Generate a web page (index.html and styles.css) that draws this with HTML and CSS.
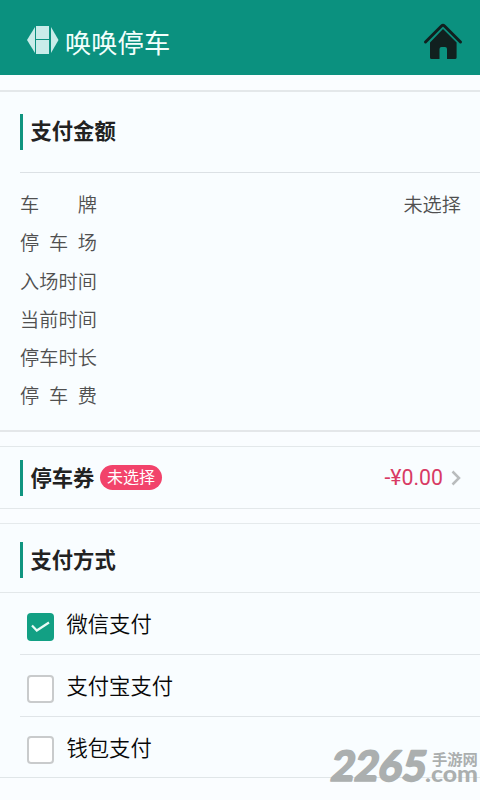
FILE: index.html
```html
<!DOCTYPE html>
<html lang="zh-CN">
<head>
<meta charset="utf-8">
<title>唤唤停车</title>
<link rel="stylesheet" href="styles.css">
</head>
<body>
<header class="topbar">
  <svg class="logo" width="32" height="28" viewBox="0 0 32 28" fill="#c9ece9">
    <path d="M8 1V27L0 14Z"/>
    <path d="M9 0H22V13H9ZM9 14H22V28H9Z"/>
    <path d="M24 1V27L31.500 14Z"/>
  </svg>
  <h1 class="brand">唤唤停车</h1>
  <svg class="home" width="40" height="38" viewBox="0 0 40 38">
    <path d="M2.500 20 18.500 4Q20 2.600 21.500 4L37.500 20" fill="none" stroke="#11201f" stroke-width="3" stroke-linecap="round" stroke-linejoin="round"/>
    <path d="M20 7 33.600 20.500V35.500Q33.600 37 32 37H24V27Q24 25 22 25H18.500Q16.500 25 16.500 27V37H8.500Q7 37 7 35.500V20.500Z" fill="#11201f"/>
  </svg>
</header>
<main>
  <section class="card amount">
    <div class="amount-head"><h2 class="title">支付金额</h2></div>
    <dl class="details">
      <div class="row"><dt>车 牌</dt><dd>未选择</dd></div>
      <div class="row"><dt>停 车 场</dt><dd></dd></div>
      <div class="row"><dt>入场时间</dt><dd></dd></div>
      <div class="row"><dt>当前时间</dt><dd></dd></div>
      <div class="row"><dt>停车时长</dt><dd></dd></div>
      <div class="row"><dt>停 车 费</dt><dd></dd></div>
    </dl>
  </section>
  <section class="card coupon">
    <h2 class="title">停车券</h2>
    <span class="badge">未选择</span>
    <span class="discount">-¥0.00</span>
    <svg class="chevron" width="10" height="16" viewBox="0 0 10 16"><path d="M1.500 1.500 8 8 1.500 14.500" fill="none" stroke="#b9bcbd" stroke-width="2.500"/></svg>
  </section>
  <section class="card methods">
    <div class="methods-head"><h2 class="title">支付方式</h2></div>
    <div class="method">
      <span class="box checked"><svg width="27" height="28" viewBox="0 0 27 28"><path d="M5 12.500 9.800 17.500 22 9.500" fill="none" stroke="#e9fbf6" stroke-width="2.200"/></svg></span>
      <span class="name">微信支付</span>
    </div>
    <div class="method"><span class="box"></span><span class="name">支付宝支付</span></div>
    <div class="method"><span class="box"></span><span class="name">钱包支付</span></div>
  </section>
</main>
<div class="watermark">
  <svg class="wm-main" width="101" height="50" viewBox="0 0 101 50">
    <text class="wm-num" x="0" y="38" textLength="95" lengthAdjust="spacingAndGlyphs" transform="translate(9.500 0) skewX(-9)">2265</text>
  </svg>
  <div class="wm-side">
    <span class="wm-cn">手游网</span>
    <svg class="wm-com-box" width="55" height="20" viewBox="0 0 55 20">
      <text class="wm-com" x="0" y="17" textLength="53" lengthAdjust="spacingAndGlyphs">.com</text>
    </svg>
  </div>
</div>
</body>
</html>
```
FILE: styles.css
```css
* { box-sizing: border-box; }
body {
  margin: 0;
  height: 800px;
  overflow: hidden;
  position: relative;
  background: #fafdff;
  color: #111;
  font-family: "Noto Sans CJK SC", sans-serif;
}
h1, h2, dl, dd { margin: 0; }
.topbar {
  display: flex;
  align-items: flex-start;
  height: 75px;
  padding: 22px 17px 0 27px;
  background: #0b917f;
}
.logo { margin-top: 4px; }
.brand {
  margin-left: 6px;
  color: #f2fffc;
  font-size: 26.3px;
  font-weight: 400;
  line-height: 40px;
}
.home { margin-left: auto; }
.title {
  height: 36px;
  padding-left: 7.5px;
  border-left: 3px solid #109580;
  color: #222;
  font-size: 21.3px;
  font-weight: 700;
  line-height: 34px;
}
.card { background: #f9fdff; }
.amount {
  height: 342px;
  margin-top: 15px;
  border-top: 2px solid #e4e8ea;
  border-bottom: 2px solid #e4e7e9;
}
.amount-head {
  height: 81px;
  margin-left: 20px;
  padding-top: 22px;
  border-bottom: 1px solid #dce1e5;
}
.amount-head .title { line-height: 32px; }
.details { padding: 12px 19px 0 20px; }
.row {
  display: flex;
  justify-content: space-between;
  height: 38.3px;
  color: #505050;
  font-size: 19.2px;
  font-weight: 350;
  line-height: 38.4px;
}
dt { width: 77px; text-align-last: justify; }
.coupon {
  display: flex;
  align-items: center;
  height: 63px;
  margin-top: 14px;
  padding: 0 19px 0 20px;
  border-top: 1px solid #e3e8ea;
  border-bottom: 1px solid #e3e8ea;
}
.badge {
  width: 62px;
  height: 25px;
  margin-left: 5.6px;
  border-radius: 13px;
  background: #f2436b;
  color: #fff;
  font-size: 16px;
  line-height: 23px;
  text-align: center;
}
.discount {
  margin-left: auto;
  color: #d83b64;
  font-family: Roboto, sans-serif;
  font-size: 21.3px;
}
.chevron { margin-left: 8px; }
.methods {
  margin-top: 14px;
  border-top: 1px solid #e5eaec;
  border-bottom: 1px solid #e0e6e8;
}
.methods-head {
  height: 69px;
  padding: 18px 0 0 20px;
  border-bottom: 1px solid #e3e8ea;
}
.method {
  display: flex;
  height: 61.4px;
  margin-left: 20px;
  padding-left: 6.5px;
}
.method + .method { border-top: 1px solid #e0e5e8; }
.box {
  width: 27px;
  height: 28px;
  margin-top: 20px;
  border: 2px solid #c9cbcc;
  border-radius: 4px;
  background: #fff;
}
.method + .method .box { margin-top: 19.5px; }
.checked { border: 0; background: #12a084; }
.name {
  margin-left: 13px;
  color: #080808;
  font-size: 21.3px;
  font-weight: 350;
  line-height: 60px;
}
.method + .method .name { line-height: 59px; }
.watermark {
  display: flex;
  position: absolute;
  left: 326px;
  top: 743px;
  color: #abafaf;
}
.wm-main, .wm-com-box { overflow: visible; }
.wm-num {
  font: 900 42px Lato, sans-serif;
  fill: #abafaf;
  stroke: #abafaf;
  stroke-width: 1.6px;
  stroke-linejoin: round;
}
.wm-side { width: 53px; padding-top: 8px; }
.wm-cn {
  display: block;
  height: 15px;
  margin-left: 5px;
  font-size: 15.3px;
  font-weight: 700;
  line-height: 15px;
  white-space: nowrap;
}
.wm-com-box { display: block; margin: -1px 0 0 -2px; }
.wm-com {
  font: 900 23px Lato, sans-serif;
  fill: #abafaf;
}
```
